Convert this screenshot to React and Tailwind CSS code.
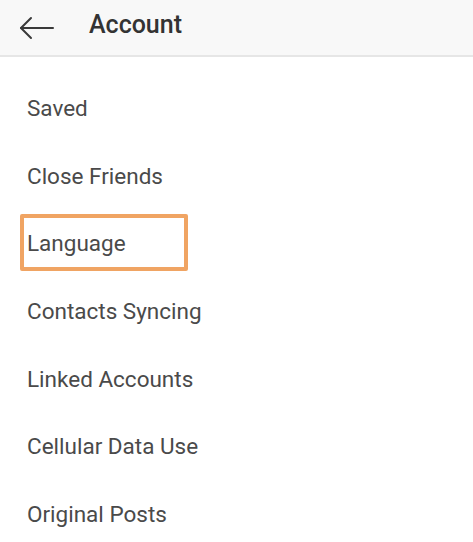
export default function App() {
  const items = [
    'Saved',
    'Close Friends',
    'Language',
    'Contacts Syncing',
    'Linked Accounts',
    'Cellular Data Use',
    'Original Posts'
  ]

  return (
    <div className="w-[473px] h-[542px] bg-white overflow-hidden" style={{ fontFamily: 'Roboto, "Liberation Sans", sans-serif' }}>
      <div className="h-[57px] bg-[#f8f8f8] border-b-2 border-[#e6e6e6] flex items-center">
        <svg width="36" height="24" viewBox="0 0 36 24" className="ml-[19px]" fill="none" stroke="#3a3a3a" strokeWidth="2" strokeLinecap="round" strokeLinejoin="round">
          <path d="M2 12h32" />
          <path d="M12 2L2 12l10 10" />
        </svg>
        <h1 className="ml-[34px] text-[25px] font-medium text-[#333] mb-[6px]">Account</h1>
      </div>

      <div className="pt-[18px]">
        {items.map((item) => (
          <div key={item} className="h-[67.7px] flex items-center pl-[27px]">
            {item === 'Language' ? (
              <span className="-ml-[7px] mb-[4px] pl-[3px] pt-[4px] w-[168px] h-[57px] flex items-center border-[4px] border-[#f0a463] rounded-[2px] text-[22.5px] text-[#4a4a4a]">
                {item}
              </span>
            ) : (
              <span className="text-[22.5px] text-[#4a4a4a]">{item}</span>
            )}
          </div>
        ))}
      </div>
    </div>
  )
}
